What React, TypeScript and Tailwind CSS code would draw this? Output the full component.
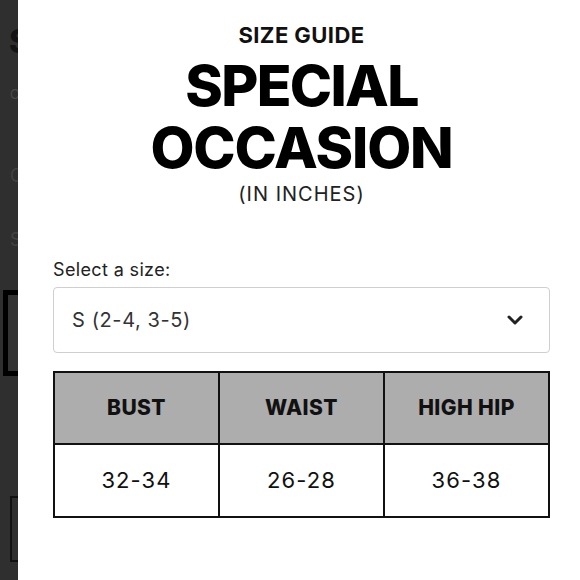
import { ChevronDown } from "lucide-react";

const font = { fontFamily: "Inter, 'Liberation Sans', sans-serif" };

function BackdropStrip() {
  // the page behind the drawer, dimmed and clipped to a thin strip
  return (
    <div className="w-[18px] h-[580px] shrink-0 overflow-hidden bg-[#2f2f2f] flex flex-col">
      <div className="mt-[26px] pl-[9px] whitespace-nowrap text-[32px] leading-[32px] font-extrabold text-[#141414]">
        S
      </div>
      <div className="mt-[28px] pl-[10px] whitespace-nowrap text-[13px] leading-[16px] text-[#4a4a4a]">
        O
      </div>
      <div className="mt-[64px] pl-[10px] whitespace-nowrap text-[18px] leading-[20px] text-[#424242]">
        C
      </div>
      <div className="mt-[44px] pl-[10px] whitespace-nowrap text-[18px] leading-[20px] text-[#424242]">
        S
      </div>
      <div className="mt-[40px] ml-[3px] w-[40px] h-[86px] border-[5px] border-black bg-[#333333]" />
      <div className="mt-[120px] ml-[10px] w-[40px] h-[66px] border-[2px] border-[#111111]" />
    </div>
  );
}

export default function App() {
  const cols = ["BUST", "WAIST", "HIGH HIP"];
  const vals = ["32-34", "26-28", "36-38"];

  return (
    <div className="flex w-[580px] h-[580px] overflow-hidden" style={font}>
      <BackdropStrip />
      <div className="flex-1 bg-white pl-[35px] pr-[30px] pt-[20px] text-[#111111]">
        <div className="flex flex-col items-center">
          <div className="text-[22px] leading-[30px] font-bold tracking-[0.02em]">SIZE GUIDE</div>
          <div className="mt-[5px] text-[57px] leading-[62px] font-extrabold tracking-[-0.03em] text-black">
            SPECIAL
          </div>
          <div className="text-[57px] leading-[62px] font-extrabold tracking-[-0.02em] text-black">
            OCCASION
          </div>
          <div className="mt-[1px] text-[20px] leading-[28px] tracking-[0.05em] text-[#222222]">
            (IN INCHES)
          </div>
        </div>

        <div className="mt-[50px] text-[18px] leading-[24px] text-[#222222] tracking-[0.02em]">Select a size:</div>
        <div className="mt-[5px] h-[66px] border border-[#cfcfcf] rounded-[4px] flex items-center justify-between pl-[18px] pr-[22px]">
          <span className="text-[20px] text-[#333333] tracking-[0.03em]">S (2-4, 3-5)</span>
          <ChevronDown size={24} strokeWidth={3} className="text-[#222222]" />
        </div>

        <table className="mt-[18px] w-full border-collapse border-2 border-[#111111] table-fixed">
          <thead>
            <tr className="bg-[#adadad] h-[72px]">
              {cols.map((c) => (
                <th
                  key={c}
                  className="border-2 border-[#111111] text-[21px] font-extrabold tracking-[0.02em] text-[#111111]"
                >
                  {c}
                </th>
              ))}
            </tr>
          </thead>
          <tbody>
            <tr className="h-[73px]">
              {vals.map((v) => (
                <td key={v} className="border-2 border-[#111111] text-center text-[22px] tracking-[0.05em] text-[#111111]">
                  {v}
                </td>
              ))}
            </tr>
          </tbody>
        </table>
      </div>
    </div>
  );
}
